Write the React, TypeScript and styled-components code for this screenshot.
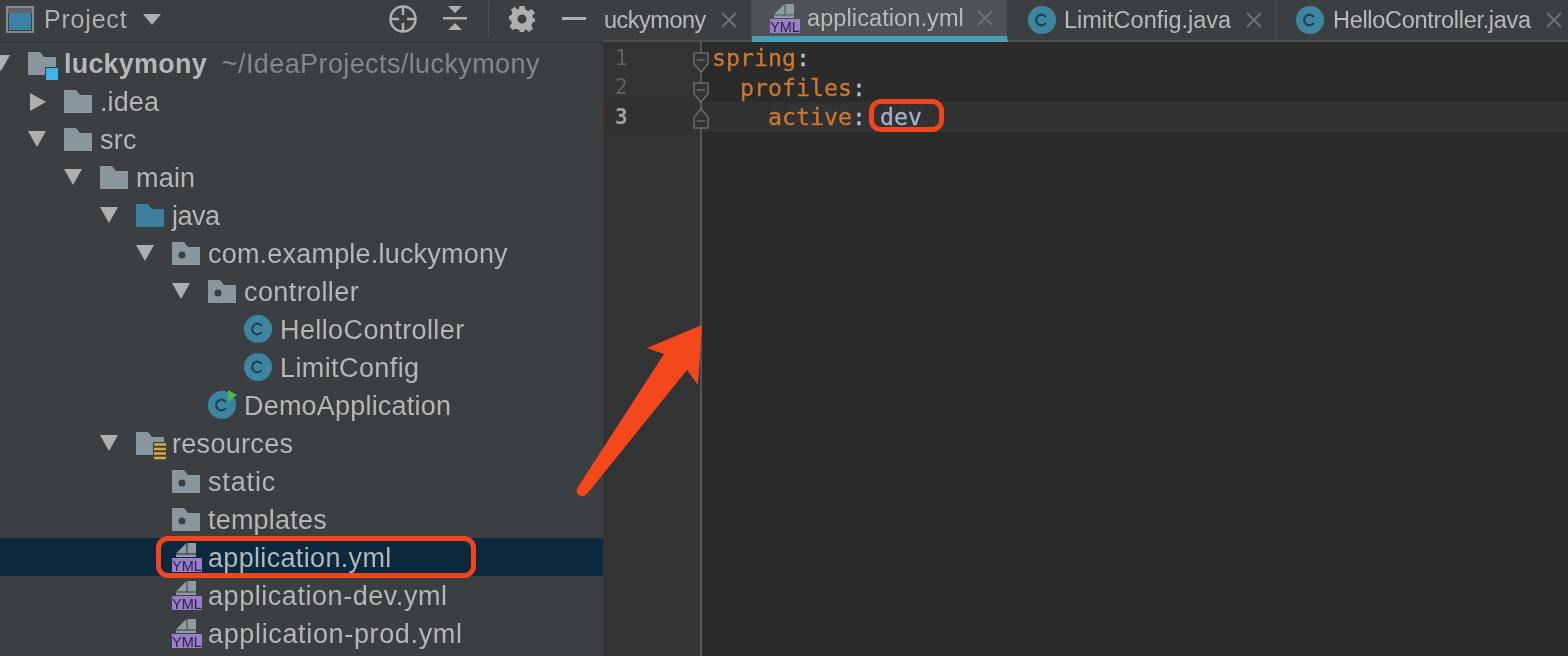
import React from "react";
import styled, { createGlobalStyle } from "styled-components";

const Global = createGlobalStyle`
  html, body { margin: 0; padding: 0; background: #3c3f41; overflow: hidden; }
  #root { width: 1568px; height: 656px; }
`;

const UI = `"Liberation Sans", Arial, sans-serif`;
const MONO = `"DejaVu Sans Mono", monospace`;

const Screen = styled.div`
  position: relative;
  width: 1568px;
  height: 656px;
  display: flex;
  overflow: hidden;
  font-family: ${UI};
  filter: blur(0.45px);
`;

const Sidebar = styled.aside`
  width: 603px;
  flex: none;
  background: #3c3f41;
  display: flex;
  flex-direction: column;
`;

const SideHeader = styled.header`
  height: 43px;
  flex: none;
  display: flex;
  align-items: center;
  padding: 0 17px 3px 6px;
  box-sizing: border-box;
  border-bottom: 2px solid #343638;
  margin-bottom: 1px;
`;

const HeaderTitle = styled.span`
  font-size: 25px;
  color: #aeb0b2;
  margin-left: 10px;
  letter-spacing: 0.8px;
`;

const HeaderSpacer = styled.div`flex: 1;`;

const HeaderDivider = styled.div`
  width: 1px;
  height: 36px;
  background: #515456;
  margin: 0 20px 0 21px;
`;

const HeaderIcon = styled.svg`
  display: block;
  flex: none;
`;

const Tree = styled.div`
  display: flex;
  flex-direction: column;
`;

const Row = styled.div<{ $level: number; $selected?: boolean }>`
  height: 38px;
  flex: none;
  position: relative;
  display: flex;
  align-items: center;
  padding-left: ${(p) => 28 + p.$level * 36}px;
  background: ${(p) => (p.$selected ? "#0d293e" : "transparent")};
`;

const Caret = styled.svg`
  position: absolute;
  top: 11px;
`;

const Label = styled.span<{ $bold?: boolean; $spacing?: number }>`
  font-size: 27px;
  margin-left: 8px;
  padding-top: 2px;
  color: #b4b6b8;
  font-weight: ${(p) => (p.$bold ? 700 : 400)};
  white-space: pre;
  letter-spacing: ${(p) => p.$spacing ?? 0.2}px;
`;

const Hint = styled.span`
  font-size: 27px;
  color: #85888a;
  margin-left: 15px;
  padding-top: 2px;
  letter-spacing: 0.4px;
`;

const Main = styled.main`
  flex: 1;
  min-width: 0;
  display: flex;
  flex-direction: column;
  background: #2b2b2b;
`;

const TabBar = styled.div`
  height: 42px;
  flex: none;
  display: flex;
  box-sizing: border-box;
  background: #3c3f41;
  border-bottom: 2px solid #4c4f51;
`;

const Tab = styled.div<{ $width: number; $active?: boolean; $pad: number }>`
  width: ${(p) => p.$width}px;
  flex: none;
  box-sizing: border-box;
  display: flex;
  align-items: center;
  padding: 0 14px 0 ${(p) => p.$pad}px;
  height: ${(p) => (p.$active ? "42px" : "40px")};
  background: ${(p) => (p.$active ? "#4e5254" : "#3c3f41")};
  border-right: 1px solid ${(p) => (p.$active ? "#3c3f41" : "#4b4e50")};
  border-bottom: ${(p) => (p.$active ? "6px solid #4a9db6" : "none")};
`;

const TabText = styled.span<{ $gap?: number; $spacing?: number }>`
  font-size: 23.5px;
  color: #b8babc;
  margin-left: ${(p) => p.$gap ?? 8}px;
  margin-right: auto;
  white-space: nowrap;
  letter-spacing: ${(p) => p.$spacing ?? 0}px;
`;

const FadedTabText = styled(TabText)`
  -webkit-mask-image: linear-gradient(90deg, #000 86%, #666 100%);
  mask-image: linear-gradient(90deg, #000 86%, #666 100%);
`;

const Editor = styled.div`
  flex: 1;
  display: flex;
  min-height: 0;
`;

const Gutter = styled.div`
  width: 99px;
  flex: none;
  box-sizing: border-box;
  background: #313335;
  border-right: 2px solid #555759;
  position: relative;
  padding-top: 1px;
`;

const Code = styled.div`
  flex: 1;
  padding-top: 1px;
`;

const GutterLine = styled.div<{ $current?: boolean }>`
  height: 29.5px;
  display: flex;
  align-items: center;
  font-family: ${MONO};
  font-size: 21px;
  padding-left: 12px;
  color: ${(p) => (p.$current ? "#a4a3a3" : "#606366")};
  font-weight: ${(p) => (p.$current ? 700 : 400)};
  background: ${(p) => (p.$current ? "#323232" : "transparent")};
`;

const CodeLine = styled.div<{ $current?: boolean; $indent: number }>`
  height: 29.5px;
  display: flex;
  align-items: center;
  font-family: ${MONO};
  font-size: 23.25px;
  white-space: pre;
  -webkit-text-stroke: 0.3px currentColor;
  padding-left: ${(p) => 10 + p.$indent * 28}px;
  background: ${(p) => (p.$current ? "#323232" : "transparent")};
`;

const Key = styled.span`color: #cc7832;`;
const Colon = styled.span`color: #a9c1d6;`;
const Value = styled.span`color: #a5b4cc; margin-left: 14px;`;

const FoldMark = styled.svg<{ $top: number }>`
  position: absolute;
  left: 90px;
  top: ${(p) => p.$top}px;
`;

const Annotation = styled.div<{ $l: number; $t: number; $w: number; $h: number }>`
  position: absolute;
  left: ${(p) => p.$l}px;
  top: ${(p) => p.$t}px;
  width: ${(p) => p.$w}px;
  height: ${(p) => p.$h}px;
  box-sizing: border-box;
  border: 5px solid #f0451f;
  border-radius: 12px;
  pointer-events: none;
`;

const ArrowSvg = styled.svg`
  position: absolute;
  left: 570px;
  top: 320px;
`;

/* ---------- icons ---------- */

const CaretDown = ({ left }: { left: number }) => (
  <Caret width="18" height="16" style={{ left }} viewBox="0 0 18 16">
    <path d="M0 0 H18 L9 16 Z" fill="#adafb1" />
  </Caret>
);

const CaretRight = ({ left }: { left: number }) => (
  <Caret width="16" height="18" style={{ left }} viewBox="0 0 16 18">
    <path d="M0 0 L16 9 L0 18 Z" fill="#adafb1" />
  </Caret>
);

const FolderBase = ({ color, children }: { color: string; children?: React.ReactNode }) => (
  <svg width="28" height="23" viewBox="0 0 28 23" style={{ flex: "none", display: "block", overflow: "visible" }}>
    <path d="M0 0 H12 L16 5 H28 V23 H0 Z" fill={color} />
    {children}
  </svg>
);

const Folder = () => <FolderBase color="#89969e" />;
const BlueFolder = () => <FolderBase color="#3d7f9f" />;
const PackageFolder = () => (
  <FolderBase color="#89969e">
    <circle cx="10" cy="13" r="3.500" fill="#3c3f41" />
  </FolderBase>
);
const RootFolder = () => (
  <FolderBase color="#89969e">
    <rect x="17" y="15" width="14" height="13" fill="#3c3f41" />
    <rect x="18" y="16" width="12" height="12" fill="#3fb3e8" />
  </FolderBase>
);
const ResourceFolder = () => (
  <FolderBase color="#89969e">
    <rect x="17" y="10" width="15" height="18" fill="#3c3f41" />
    <path d="M18 12.500H30M18 17H30M18 21.500H30M18 26H30" stroke="#d8a93f" strokeWidth="2.400" />
  </FolderBase>
);

const ClassIcon = ({ run }: { run?: boolean }) => (
  <svg width="28" height="28" viewBox="0 0 28 28" style={{ flex: "none", display: "block", overflow: "visible" }}>
    <circle cx="14" cy="14" r="14" fill="#3e86a0" />
    <path d="M17.800 11 A5.300 5.300 0 1 0 17.800 17" fill="none" stroke="#1f3f58" strokeWidth="2.200" />
    {run && <path d="M20 -1 L29 4 L20 10 Z" fill="#4cb848" />}
  </svg>
);

const YmlIcon = () => (
  <svg width="30" height="29" viewBox="0 0 30 29" style={{ flex: "none", display: "block", marginRight: -2 }}>
    <path d="M4 10.500 L14.500 0 V10.500 Z" fill="#8f9ba2" />
    <rect x="15.500" y="0" width="8.500" height="10.500" fill="#8f9ba2" />
    <rect x="4" y="11.500" width="20" height="2.500" fill="#8f9ba2" />
    <rect x="0" y="15" width="30" height="14" fill="#9a7ecb" />
    <text x="15" y="27.500" textAnchor="middle" fontFamily={UI} fontSize="14.500" fill="#2c2244">YML</text>
  </svg>
);

const CloseX = () => (
  <svg width="16" height="16" viewBox="0 0 16 16" style={{ flex: "none", display: "block" }}>
    <path d="M1 1 L15 15 M15 1 L1 15" stroke="#707375" strokeWidth="1.800" />
  </svg>
);

const rows: { level: number; caret?: "down" | "right"; icon: React.ReactNode; text: string; selected?: boolean; bold?: boolean; hint?: string; spacing?: number }[] = [
  { level: 0, caret: "down", icon: <RootFolder />, text: "luckymony", bold: true, hint: "~/IdeaProjects/luckymony" },
  { level: 1, caret: "right", icon: <Folder />, text: ".idea", spacing: 0.1 },
  { level: 1, caret: "down", icon: <Folder />, text: "src" },
  { level: 2, caret: "down", icon: <Folder />, text: "main" },
  { level: 3, caret: "down", icon: <BlueFolder />, text: "java", spacing: -0.5 },
  { level: 4, caret: "down", icon: <PackageFolder />, text: "com.example.luckymony" },
  { level: 5, caret: "down", icon: <PackageFolder />, text: "controller", spacing: 0.4 },
  { level: 6, icon: <ClassIcon />, text: "HelloController", spacing: 0.4 },
  { level: 6, icon: <ClassIcon />, text: "LimitConfig", spacing: 0.4 },
  { level: 5, icon: <ClassIcon run />, text: "DemoApplication" },
  { level: 3, caret: "down", icon: <ResourceFolder />, text: "resources", spacing: 0.3 },
  { level: 4, icon: <PackageFolder />, text: "static", spacing: 0.85 },
  { level: 4, icon: <PackageFolder />, text: "templates" },
  { level: 4, icon: <YmlIcon />, text: "application.yml", selected: true, spacing: 0.33 },
  { level: 4, icon: <YmlIcon />, text: "application-dev.yml", spacing: 0.55 },
  { level: 4, icon: <YmlIcon />, text: "application-prod.yml", spacing: 0.65 },
];

export default function App() {
  return (
    <Screen>
      <Global />
      <Sidebar>
        <SideHeader>
          <svg width="28" height="28" viewBox="0 0 28 28" style={{ display: "block", flex: "none" }}>
            <rect x="1" y="2" width="26" height="25" fill="none" stroke="#85898c" strokeWidth="2" />
            <rect x="2" y="3" width="24" height="5" fill="#5f6365" />
            <rect x="3" y="8" width="22" height="17" fill="#3b83a6" />
          </svg>
          <HeaderTitle>Project</HeaderTitle>
          <HeaderIcon width="18" height="11" viewBox="0 0 18 11" style={{ marginLeft: 16 }}>
            <path d="M0 0 H18 L9 11 Z" fill="#adafb1" />
          </HeaderIcon>
          <HeaderSpacer />
          <HeaderIcon width="28" height="28" viewBox="0 0 28 28">
            <circle cx="14" cy="14" r="12.500" fill="none" stroke="#adafb1" strokeWidth="2.500" />
            <path d="M14 1 V10 M14 18 V27 M1 14 H10 M18 14 H27" stroke="#adafb1" strokeWidth="2.500" />
          </HeaderIcon>
          <HeaderIcon width="24" height="26" viewBox="0 0 24 26" style={{ marginLeft: 26 }}>
            <path d="M5 0 H19 L12 7 Z M5 24 H19 L12 17 Z" fill="#adafb1" />
            <rect x="0" y="11" width="24" height="2.500" fill="#adafb1" />
          </HeaderIcon>
          <HeaderDivider />
          <HeaderIcon width="26" height="26" viewBox="0 0 26 26">
            <path
              fill="#adafb1"
              fillRule="evenodd"
              d="M10.500 0 H15.500 L16.300 3.600 L19.500 5 L22.700 3 L26 7 L23.400 9.500 L24 12 L26 13 V15.500 L23.400 16.500 L22.500 19.500 L24 22.700 L20 26 L17 23.500 L15.500 24 L15 26 H11 L10 23.800 L6.500 22.800 L3.300 24 L0.500 20 L2.800 17.500 L2 14.500 L0 13.500 V10 L2.500 9 L3.300 6.500 L2 3.300 L6 1 L8.500 3.500 L10 3 Z M13 8.500 A4.500 4.500 0 1 0 13 17.500 A4.500 4.500 0 1 0 13 8.500 Z"
            />
          </HeaderIcon>
          <HeaderIcon width="24" height="4" viewBox="0 0 24 4" style={{ marginLeft: 27 }}>
            <rect width="24" height="3" fill="#adafb1" />
          </HeaderIcon>
        </SideHeader>
        <Tree>
          {rows.map((r) => (
            <Row key={r.text} $level={r.level} $selected={r.selected}>
              {r.caret === "down" && <CaretDown left={(r.level - 1) * 36 + 28} />}
              {r.caret === "right" && <CaretRight left={(r.level - 1) * 36 + 30} />}
              {r.icon}
              <Label $bold={r.bold} $spacing={r.spacing}>{r.text}</Label>
              {r.hint && <Hint>{r.hint}</Hint>}
            </Row>
          ))}
        </Tree>
      </Sidebar>
      <Main>
        <TabBar>
          <Tab $width={149} $pad={1}>
            <FadedTabText $gap={0} $spacing={-0.5}>uckymony</FadedTabText>
            <CloseX />
          </Tab>
          <Tab $width={256} $pad={18} $active>
            <YmlIcon />
            <TabText $gap={9} $spacing={0.1}>application.yml</TabText>
            <CloseX />
          </Tab>
          <Tab $width={269} $pad={20}>
            <ClassIcon />
            <TabText>LimitConfig.java</TabText>
            <CloseX />
          </Tab>
          <Tab $width={300} $pad={19}>
            <ClassIcon />
            <TabText $gap={9} $spacing={-0.3}>HelloController.java</TabText>
            <CloseX />
          </Tab>
        </TabBar>
        <Editor>
          <Gutter>
            <GutterLine>1</GutterLine>
            <GutterLine>2</GutterLine>
            <GutterLine $current>3</GutterLine>
            <FoldMark $top={10} width="16" height="21" viewBox="0 0 16 21">
              <path d="M1 1 H15 V12 L8 20 L1 12 Z" fill="#313335" stroke="#6a6d70" strokeWidth="1.500" />
              <path d="M4 8 H12" stroke="#6a6d70" strokeWidth="1.500" />
            </FoldMark>
            <FoldMark $top={40} width="16" height="21" viewBox="0 0 16 21">
              <path d="M1 1 H15 V12 L8 20 L1 12 Z" fill="#313335" stroke="#6a6d70" strokeWidth="1.500" />
              <path d="M4 8 H12" stroke="#6a6d70" strokeWidth="1.500" />
            </FoldMark>
            <FoldMark $top={66} width="16" height="21" viewBox="0 0 16 21">
              <path d="M8 1 L15 9 V20 H1 V9 Z" fill="#323232" stroke="#6a6d70" strokeWidth="1.500" />
              <path d="M4 13 H12" stroke="#6a6d70" strokeWidth="1.500" />
            </FoldMark>
          </Gutter>
          <Code>
            <CodeLine $indent={0}><Key>spring</Key><Colon>:</Colon></CodeLine>
            <CodeLine $indent={1}><Key>profiles</Key><Colon>:</Colon></CodeLine>
            <CodeLine $indent={2} $current><Key>active</Key><Colon>:</Colon><Value>dev</Value></CodeLine>
          </Code>
        </Editor>
      </Main>
      <Annotation $l={156} $t={536} $w={320} $h={42} />
      <Annotation $l={869} $t={99} $w={75} $h={33} />
      <ArrowSvg width="140" height="180" viewBox="570 320 140 180">
        <path
          d="M702 325 L698 385 L687 370 L587 494 Q581 499 577 493 Q576 490 578 487 L664 354 L647 348 Z"
          fill="#f4471c"
        />
      </ArrowSvg>
    </Screen>
  );
}
